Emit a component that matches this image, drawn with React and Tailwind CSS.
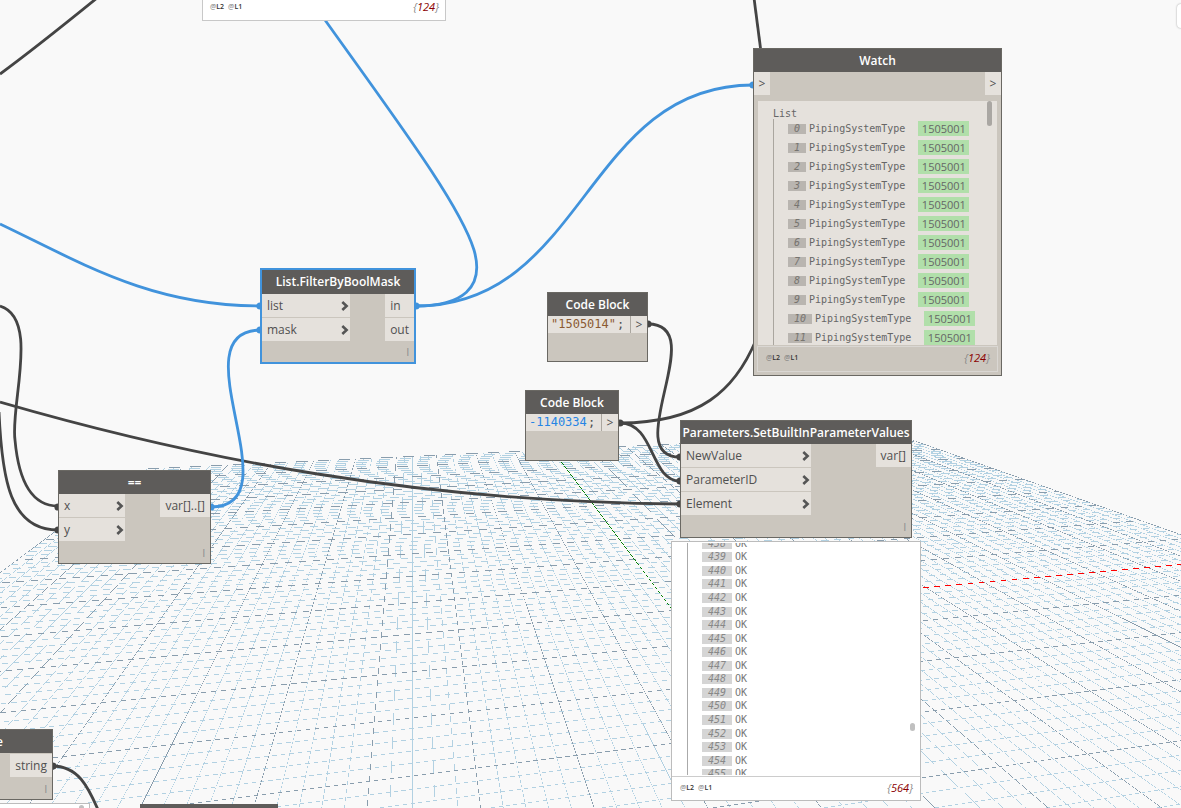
import { useState } from "react"
import clsx from "clsx"

// Ground grid: every line runs to one of two vanishing points on the horizon
const HORIZON = 264
const VANISH_X = 412.5
const SIDE_DISTANCE = 4087.5
const GRID_HALF = 50
const MAX_X = 1600
const MAX_Y = 1000
const THICKNESS = 0.52

const alongSlope = (i) => 0.04175 * (i + 18)
const acrossDrop = (j) => 1 / (0.0027027 + 0.00004995 * j)

function gridPoint(i, j) {
  const m = alongSlope(i)
  const drop = acrossDrop(j)
  const y = drop / (1 + (m * drop) / SIDE_DISTANCE)
  return [VANISH_X + m * y, HORIZON + y]
}

// Thin lines without anti-aliasing: only the pixels whose centre is covered are filled
function gridLine(from, to) {
  const [x1, y1] = gridPoint(from[0], from[1])
  const [x2, y2] = gridPoint(to[0], to[1])
  const flat = Math.abs(x2 - x1) > Math.abs(y2 - y1)
  const [a1, b1, a2, b2] = flat ? [x1, y1, x2, y2] : [y1, x1, y2, x2]
  const slope = (b2 - b1) / (a2 - a1)
  const half = (THICKNESS / 2) * Math.sqrt(1 + slope * slope)
  const start = Math.max(0, Math.round(Math.min(a1, a2)))
  const end = Math.min(flat ? MAX_X : MAX_Y, Math.round(Math.max(a1, a2)))

  let d = ""
  let runStart = -1
  let runRow = -1
  const flush = (a) => {
    if (runStart < 0) return
    const n = a - runStart
    d += flat ? `M${runStart} ${runRow}h${n}v1h${-n}z` : `M${runRow} ${runStart}h1v${n}h-1z`
    runStart = -1
  }

  for (let a = start; a < end; a++) {
    const b = b1 + (a + 0.5 - a1) * slope
    const row = Math.floor(b)
    const on = b > 0 && b < (flat ? MAX_Y : MAX_X) && Math.abs(b - row - 0.5) <= half
    if (!on || row !== runRow) flush(a)
    if (on && runStart < 0) {
      runStart = a
      runRow = row
    }
  }
  flush(end)
  return d
}

function gridLines(list) {
  return list
    .map((n) => gridLine([n, GRID_HALF], [n, -40]) + (n > -40 ? gridLine([-GRID_HALF, n], [GRID_HALF, n]) : ""))
    .join("")
}

const steps = Array.from({ length: GRID_HALF * 2 + 1 }, (_, n) => n - GRID_HALF)
const minorPath = gridLines(steps.filter((n) => n % 5 !== 0))
const majorPath = gridLines(steps.filter((n) => n % 5 === 0))
const yAxisPath = gridLine([0, GRID_HALF], [0, 0])
const xAxisPath = gridLine([0, 0], [GRID_HALF, 0])

function Grid() {
  return (
    <g shapeRendering="crispEdges">
      <path d={minorPath} fill="#b2d1e2" />
      <path d={majorPath} fill="#899dad" />
      <path d={yAxisPath} fill="#008000" />
      <path d={xAxisPath} fill="#ff0000" />
    </g>
  )
}

const BLUE = "#4193dc"
const DARK = "#444444"

const wires = [
  { color: DARK, d: "M0 74 C30 52 65 24 97 -2" },
  { color: DARK, d: "M754 -2 L761 52" },
  { color: DARK, d: "M620 423 C700 423 735 390 756 340", ends: [[620, 423]] },
  { color: DARK, d: "M648 324 C712 324 618 457 680 457", ends: [[648, 324], [680, 457]] },
  { color: DARK, d: "M620 423 C655 423 650 481 680 481", ends: [[680, 481]] },
  { color: DARK, d: "M0 402 C200 460 420 502 680 504", ends: [[680, 504]] },
  { color: DARK, d: "M0 306 C40 318 10 405 15 440 C19 485 34 506 58 506", ends: [[58, 507]] },
  { color: DARK, d: "M-1 412 C2 480 10 530 58 530", ends: [[58, 530]] },
  { color: DARK, d: "M52 766 C78 766 88 786 99 812", ends: [[53, 766]] },
  { color: BLUE, d: "M325 20 C400 125 460 205 474 250 C485 288 462 306 416 306", ends: [[416, 306]] },
  { color: BLUE, d: "M416 306 C585 306 585 85 753 85", ends: [[753, 85]] },
  { color: BLUE, d: "M0 224 C80 262 150 306 261 306", ends: [[260, 306]] },
  { color: BLUE, d: "M211 507 C296 507 175 330 261 330", ends: [[211, 507], [260, 330]] },
]

function Wires() {
  return (
    <g fill="none" strokeWidth="2.8">
      {wires.map((w) => (
        <g key={w.d}>
          <path d={w.d} stroke={w.color} />
          {(w.ends || []).map(([x, y]) => (
            <circle key={`${x}-${y}`} cx={x} cy={y} r="3.6" fill={w.color} />
          ))}
        </g>
      ))}
    </g>
  )
}

function Chevron() {
  return (
    <svg viewBox="0 0 8 10" className="w-2 h-[10px] shrink-0">
      <path d="M1.3 1 L5.6 5 L1.3 9" fill="none" stroke="#555555" strokeWidth="2.6" />
    </svg>
  )
}

function Node({ title, className, selected, children }) {
  return (
    <section
      className={clsx(
        "absolute flex flex-col bg-[#cbc6be]",
        selected ? "border-2 border-[#4193dc]" : "border border-[#6a6863]",
        className
      )}
    >
      <h2
        className={clsx(
          "flex shrink-0 justify-center bg-[#5e5c5a] text-[12px] font-semibold leading-6 text-white whitespace-nowrap",
          selected ? "h-6" : "h-[23px]"
        )}
      >
        {title}
      </h2>
      {children}
    </section>
  )
}

function Ports({ inputs = [], outputs, inputWidth }) {
  return (
    <div className="flex justify-between">
      <div className={clsx("flex flex-col gap-px", inputWidth)}>
        {inputs.map((name) => (
          <button key={name} type="button" className="flex h-[23px] items-center justify-between bg-[#e5e1dc] pl-[5px] pr-px">
            <span>{name}</span>
            <Chevron />
          </button>
        ))}
      </div>
      <div className="flex flex-col gap-px">
        {outputs.map((name) => (
          <button key={name} type="button" className="h-[23px] bg-[#e5e1dc] px-[5px] text-left">
            {name}
          </button>
        ))}
      </div>
    </div>
  )
}

function Lacing() {
  return <span className="mt-auto self-end pb-1 pr-[5px] text-[10px] leading-3 text-[#85888c]">l</span>
}

function CodeBlock({ className, initial, inputClass }) {
  const [code, setCode] = useState(initial)
  return (
    <Node title="Code Block" className={className}>
      <div className="flex h-[17px]">
        <div className="flex flex-1 bg-[#e5e1dc] font-['DejaVu_Sans_Mono',monospace] text-[12px] leading-[17px]">
          <input
            aria-label="Code"
            value={code}
            onChange={(e) => setCode(e.target.value)}
            className={clsx("h-[17px] bg-transparent outline-none", inputClass)}
          />
          <span>;</span>
        </div>
        <button type="button" className="w-[17px] border-l border-[#aaa69f] bg-[#e5e1dc] text-[12px] leading-4">
          &gt;
        </button>
      </div>
    </Node>
  )
}

function Levels({ count }) {
  return (
    <div className="flex items-center justify-between">
      <div className="flex gap-1 text-[7px] font-semibold text-[#333333]">
        <span><span className="font-normal text-[#777777]">@</span>L2</span>
        <span><span className="font-normal text-[#777777]">@</span>L1</span>
      </div>
      <span className="text-[11px] italic text-[#888888]">
        {"{"}<span className="text-[#8b0000]">{count}</span>{"}"}
      </span>
    </div>
  )
}

function WatchNode() {
  const rows = Array.from({ length: 12 }, (_, n) => n)
  return (
    <Node title="Watch" className="left-[753px] top-[48px] h-[328px] w-[249px]">
      <div className="flex h-[23px] shrink-0 justify-between text-[12px]">
        <button type="button" className="w-4 bg-[#e5e1dc]">&gt;</button>
        <button type="button" className="w-4 bg-[#e5e1dc]">&gt;</button>
      </div>
      <div className="relative mx-1 mt-[6px] h-[244px] shrink-0 overflow-hidden bg-[#e5e1dc] pl-[15px] pt-[6px] font-['DejaVu_Sans_Mono',monospace] text-[10px] text-[#666666]">
        <p className="h-3 leading-[14px]">List</p>
        <ul className="border-l border-[#aaa69f] pl-[14px]">
          {rows.map((n) => (
            <li key={n} className="flex h-[19px] items-center">
              <span className="mr-[3px] bg-[#b9b5b0] px-[6px] italic leading-[10px] text-[#77746f]">{n}</span>
              <span>PipingSystemType</span>
              <span className="ml-[13px] w-[51px] bg-[#b1dfaa] text-center font-['Open_Sans',sans-serif] text-[11px] leading-[15px]">
                1505001
              </span>
            </li>
          ))}
        </ul>
        <div className="absolute right-[5px] top-0 h-[25px] w-[5px] rounded-full bg-[#aaa7a3]" />
      </div>
      <div className="mx-[3px] mt-px h-[26px] border border-[#dad7d3] pl-2 pr-[7px]">
        <Levels count={124} />
      </div>
    </Node>
  )
}

function ResultPreview() {
  const rows = Array.from({ length: 18 }, (_, n) => 438 + n)
  return (
    <section className="absolute left-[671px] top-[541px] flex h-[260px] w-[250px] flex-col border border-[#bcbcbc] bg-white">
      <div className="relative mb-px ml-[15px] mt-px h-[232px] shrink-0 overflow-hidden border-l border-[#aaaaaa]">
        <ul className="-mt-[6px] ml-[14px] grid h-[244px] auto-rows-fr font-['DejaVu_Sans_Mono',monospace] text-[10px] text-[#777777]">
          {rows.map((n) => (
            <li key={n} className="flex items-center">
              <span className="mr-[3px] w-[30px] bg-[#d5d5d5] text-center italic leading-[10px] text-[#888888]">{n}</span>
              <span className="leading-3">OK</span>
            </li>
          ))}
        </ul>
        <div className="absolute bottom-[44px] right-[5px] h-2 w-[5px] rounded-full bg-[#c0c0c0]" />
      </div>
      <div className="flex-1 border-t border-[#cccccc] pl-2 pr-[7px]">
        <Levels count={564} />
      </div>
    </section>
  )
}

export default function App() {
  return (
    <main className="relative h-screen w-full overflow-hidden bg-[#f9f9f9] font-['Open_Sans',sans-serif] text-[12px] leading-[22px] text-[#505050]">
      <svg className="absolute inset-0 h-full w-full">
        <Grid />
        <Wires />
      </svg>

      <section className="absolute left-[202px] top-[-20px] h-[41px] w-[244px] border border-[#c8c8c8] bg-white pl-[7px] pr-[6px] pt-[15px]">
        <Levels count={124} />
      </section>

      <WatchNode />

      <Node title="List.FilterByBoolMask" selected className="left-[260px] top-[268px] h-[96px] w-[156px]">
        <Ports inputs={["list", "mask"]} outputs={["in", "out"]} inputWidth="w-[88px]" />
        <Lacing />
      </Node>

      <CodeBlock
        className="left-[547px] top-[292px] h-[70px] w-[101px]"
        initial={'"1505014"'}
        inputClass="ml-[3px] w-[66px] text-[#8b5a32]"
      />
      <CodeBlock
        className="left-[525px] top-[390px] h-[71px] w-[94px]"
        initial="-1140334"
        inputClass="ml-[3px] w-[59px] text-[#2585e5]"
      />

      <Node title="Parameters.SetBuiltInParameterValues" className="left-[680px] top-[420px] h-[118px] w-[232px]">
        <Ports inputs={["NewValue", "ParameterID", "Element"]} outputs={["var[]"]} inputWidth="w-[130px]" />
        <Lacing />
      </Node>
      <ResultPreview />

      <Node title="==" className="left-[58px] top-[470px] h-[94px] w-[153px]">
        <Ports inputs={["x", "y"]} outputs={["var[]..[]"]} inputWidth="w-[66px]" />
        <Lacing />
      </Node>

      <Node title={<span className="mr-auto -ml-1">e</span>} className="left-0 top-[729px] h-[71px] w-[53px] border-l-0">
        <div className="mt-px">
          <Ports outputs={["string"]} />
        </div>
        <Lacing />
      </Node>
      <section className="absolute left-0 top-[803px] h-8 w-[90px] border border-l-0 border-[#bcbcbc] bg-white">
        <div className="ml-auto mr-[5px] mt-px h-6 w-[5px] rounded-full bg-[#c0c0c0]" />
      </section>
      <div className="absolute left-[140px] top-[804px] h-6 w-[138px] bg-[#5e5c5a]" />

      <aside className="absolute left-[1177px] top-1 h-6 w-10 rounded-sm bg-white shadow-[0_0_2px_#999999]" />
    </main>
  )
}
